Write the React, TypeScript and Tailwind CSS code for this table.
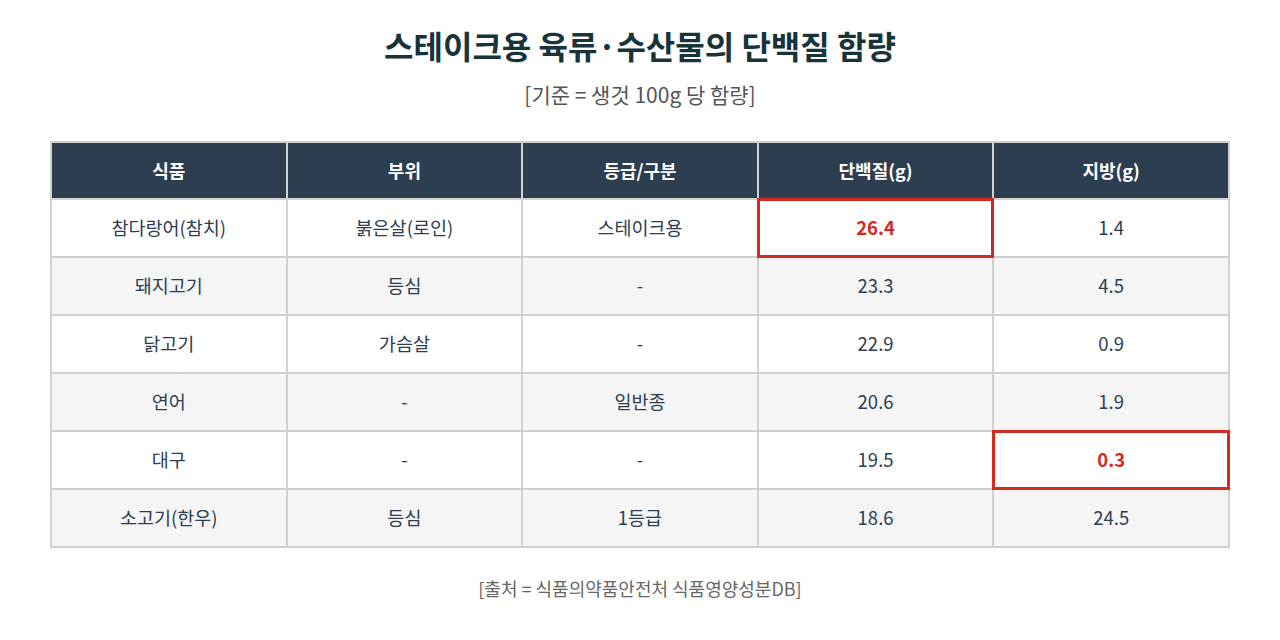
const ROWS = [
  { food: "참다랑어(참치)", part: "붉은살(로인)", grade: "스테이크용", protein: "26.4", fat: "1.4", hp: true },
  { food: "돼지고기", part: "등심", grade: "-", protein: "23.3", fat: "4.5" },
  { food: "닭고기", part: "가슴살", grade: "-", protein: "22.9", fat: "0.9" },
  { food: "연어", part: "-", grade: "일반종", protein: "20.6", fat: "1.9" },
  { food: "대구", part: "-", grade: "-", protein: "19.5", fat: "0.3", hf: true },
  { food: "소고기(한우)", part: "등심", grade: "1등급", protein: "18.6", fat: "24.5" },
];

const HEAD = ["식품", "부위", "등급/구분", "단백질(g)", "지방(g)"];

function Cell({ children, hot }: { children: React.ReactNode; hot?: boolean }) {
  return (
    <td className="relative border-2 border-[#d0d0d0] text-center h-[58px] p-0">
      {hot && <span className="absolute -inset-[2px] border-[3px] border-[#d42a20]" />}
      <span className={hot ? "font-bold text-[#d42a20]" : ""}>{children}</span>
    </td>
  );
}

export default function App() {
  return (
    <div
      className="w-[1280px] h-[640px] bg-white flex flex-col items-center pt-[21px]"
      style={{ fontFamily: '"Noto Sans CJK KR", "Noto Sans", sans-serif' }}
    >
      <h1 className="text-[32px] font-bold text-[#17343a] leading-[48px]">스테이크용 육류·수산물의 단백질 함량</h1>
      <p className="text-[21px] text-[#555] mt-[10px] leading-[30px]">[기준 = 생것 100g 당 함량]</p>

      <table className="mt-[32px] w-[1180px] border-collapse table-fixed text-[18.5px] text-[#2c3e50]">
        <thead>
          <tr className="bg-[#2c3e50]">
            {HEAD.map(h => (
              <th key={h} className="border-2 border-[#d0d0d0] h-[57px] text-white font-bold text-[18px]">{h}</th>
            ))}
          </tr>
        </thead>
        <tbody>
          {ROWS.map((r, i) => (
            <tr key={r.food} className={i % 2 ? "bg-[#f5f5f5]" : "bg-white"}>
              <Cell>{r.food}</Cell>
              <Cell>{r.part}</Cell>
              <Cell>{r.grade}</Cell>
              <Cell hot={r.hp}>{r.protein}</Cell>
              <Cell hot={r.hf}>{r.fat}</Cell>
            </tr>
          ))}
        </tbody>
      </table>

      <p className="mt-[27px] text-[18px] text-[#666]">[출처 = 식품의약품안전처 식품영양성분DB]</p>
    </div>
  );
}
